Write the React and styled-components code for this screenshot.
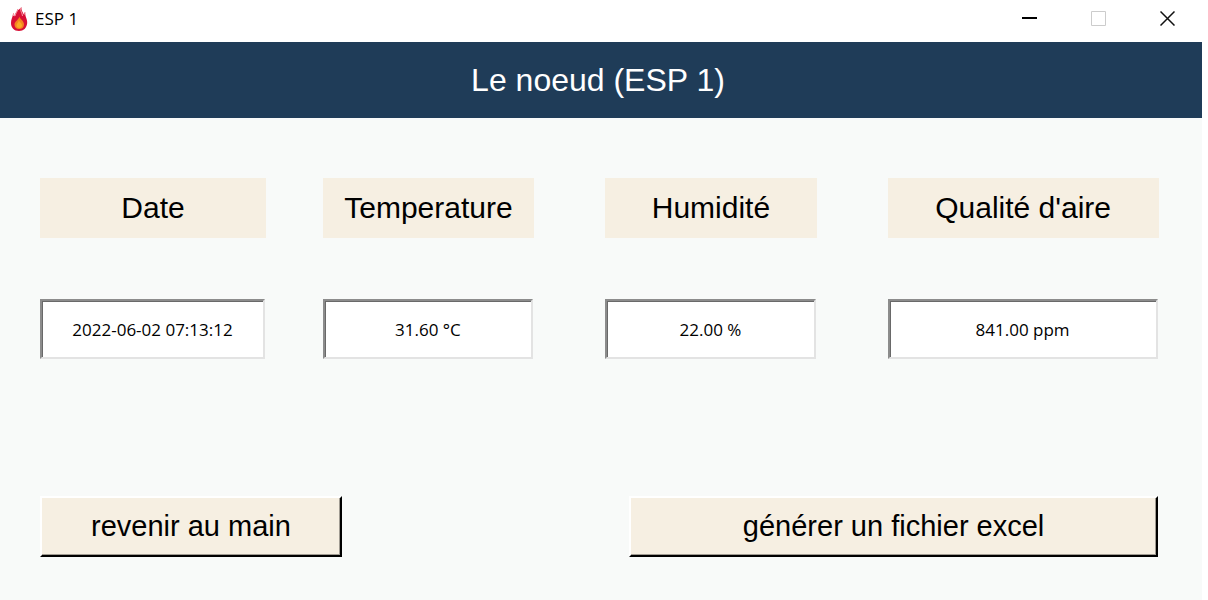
import React from "react";
import styled, { createGlobalStyle } from "styled-components";

const GlobalStyle = createGlobalStyle`
  * { box-sizing: border-box; }
  body { margin: 0; background: #ffffff; }
`;

const Window = styled.div`
  display: flex;
  flex-direction: column;
  min-height: 100vh;
  padding-right: 6px;
  background: #ffffff;
  color: #000000;
  font-family: "Liberation Sans", Arial, sans-serif;
`;

const TitleBar = styled.header`
  display: flex;
  align-items: center;
  justify-content: space-between;
  height: 42px;
  padding: 0 0 5px 9px;
`;

const TitleGroup = styled.div`
  display: flex;
  align-items: center;
  gap: 6px;
  font: 17px "Open Sans", "Noto Sans", sans-serif;
`;

const WindowControls = styled.div`
  display: flex;
`;

const ControlButton = styled.button`
  display: flex;
  align-items: center;
  justify-content: center;
  width: 69px;
  height: 37px;
  padding: 0;
  border: 0;
  background: transparent;
`;

const Banner = styled.h1`
  display: flex;
  align-items: center;
  justify-content: center;
  height: 76px;
  margin: 0;
  padding-right: 6px;
  background: #1f3c58;
  color: #ffffff;
  font-size: 32px;
  font-weight: 400;
`;

const Content = styled.main`
  flex: 1;
  padding: 60px 32px 40px 40px;
  background: #f8faf9;
`;

const Readings = styled.div`
  display: grid;
  grid-template-columns: repeat(4, 1fr);
`;

const Reading = styled.div`
  display: flex;
  flex-direction: column;
  gap: 61px;
  width: ${(p) => p.$width};
`;

const ReadingLabel = styled.label`
  display: flex;
  align-items: center;
  justify-content: center;
  height: 60px;
  background: #f6efe2;
  font-size: 30px;
  white-space: nowrap;
`;

const ReadingField = styled.input`
  width: calc(100% - 1px);
  height: 60px;
  padding: 0;
  border: 2px solid;
  border-color: #8c8c8c #e3e3e3 #e3e3e3 #8c8c8c;
  border-radius: 0;
  outline: 0;
  background: #ffffff;
  box-shadow: inset 1px 1px #696969;
  color: #000000;
  font: 17px "Open Sans", "Noto Sans", sans-serif;
  text-align: center;
`;

const Actions = styled.div`
  display: flex;
  justify-content: space-between;
  padding: 137px 12px 0 0;
`;

const ActionButton = styled.button`
  width: ${(p) => p.$width};
  height: 61px;
  padding: 0;
  border: 2px solid;
  border-color: #ffffff #000000 #000000 #ffffff;
  border-radius: 0;
  background: #f6efe2;
  box-shadow: inset -1px -1px #a09b92;
  color: #000000;
  font: 29px "Liberation Sans", Arial, sans-serif;
`;

const READINGS = [
  { id: "date", label: "Date", value: "2022-06-02 07:13:12", width: "80%" },
  { id: "temperature", label: "Temperature", value: "31.60 °C", width: "75%" },
  { id: "humidity", label: "Humidité", value: "22.00 %", width: "75%" },
  { id: "air", label: "Qualité d'aire", value: "841.00 ppm", width: "96%" },
];

function FlameIcon() {
  return (
    <svg width="20" height="24" viewBox="0 0 20 24" aria-hidden="true">
      <path
        fill="#d80f35"
        d="M10 24C5 24 2 20.500 2 16C2 12.500 3.500 10.500 4 7L5.500 9.500C5.500 6 8.500 5 8.500 2L9.500 3L12.500 0C12 3.500 14 5 14.500 7.500L16 5C16 9.500 18.500 12 18.200 16C17.800 21 14.500 24 10 24Z"
      />
      <path
        fill="none"
        stroke="#f799a6"
        d="M4.500 6V9M8.500 2.500C8.500 5 6.500 6 6 9M11.800 1C11 4.500 13.500 6 13.500 9M16 5V8"
      />
      <path
        fill="#f3841f"
        d="M10.500 9.500C10.500 12 15 13.500 15 17.500C15 20.500 12.800 22 10.200 22C7 22 5.500 20 5.500 17.500C5.500 14.500 9.500 13 10.500 9.500Z"
      />
      <path
        fill="#fbaa25"
        d="M10 13C10 15 13 16 13 18.500C13 20 11.800 21 10.200 21S7.500 20 7.500 18.500C7.500 16.500 9.500 15.500 10 13Z"
      />
    </svg>
  );
}

export default function App() {
  return (
    <>
      <GlobalStyle />
      <Window>
        <TitleBar>
          <TitleGroup>
            <FlameIcon />
            <span>ESP 1</span>
          </TitleGroup>
          <WindowControls>
            <ControlButton type="button" aria-label="Réduire">
              <svg width="15" height="15" viewBox="0 0 15 15">
                <path d="M0 7H15" stroke="#000000" strokeWidth="2" />
              </svg>
            </ControlButton>
            <ControlButton type="button" aria-label="Agrandir" disabled>
              <svg width="15" height="15" viewBox="0 0 15 15">
                <path d="M.5 .5H14.500V14.500H.5Z" fill="none" stroke="#cccccc" />
              </svg>
            </ControlButton>
            <ControlButton type="button" aria-label="Fermer">
              <svg width="15" height="15" viewBox="0 0 15 15">
                <path d="M.5 .5L14.500 14.500M14.500 .5L.5 14.500" stroke="#111111" strokeWidth="1.500" />
              </svg>
            </ControlButton>
          </WindowControls>
        </TitleBar>
        <Banner>Le noeud (ESP 1)</Banner>
        <Content>
          <Readings>
            {READINGS.map((r) => (
              <Reading key={r.id} $width={r.width}>
                <ReadingLabel htmlFor={r.id}>{r.label}</ReadingLabel>
                <ReadingField id={r.id} type="text" defaultValue={r.value} />
              </Reading>
            ))}
          </Readings>
          <Actions>
            <ActionButton type="button" $width="27%">revenir au main</ActionButton>
            <ActionButton type="button" $width="47.300%">générer un fichier excel</ActionButton>
          </Actions>
        </Content>
      </Window>
    </>
  );
}
